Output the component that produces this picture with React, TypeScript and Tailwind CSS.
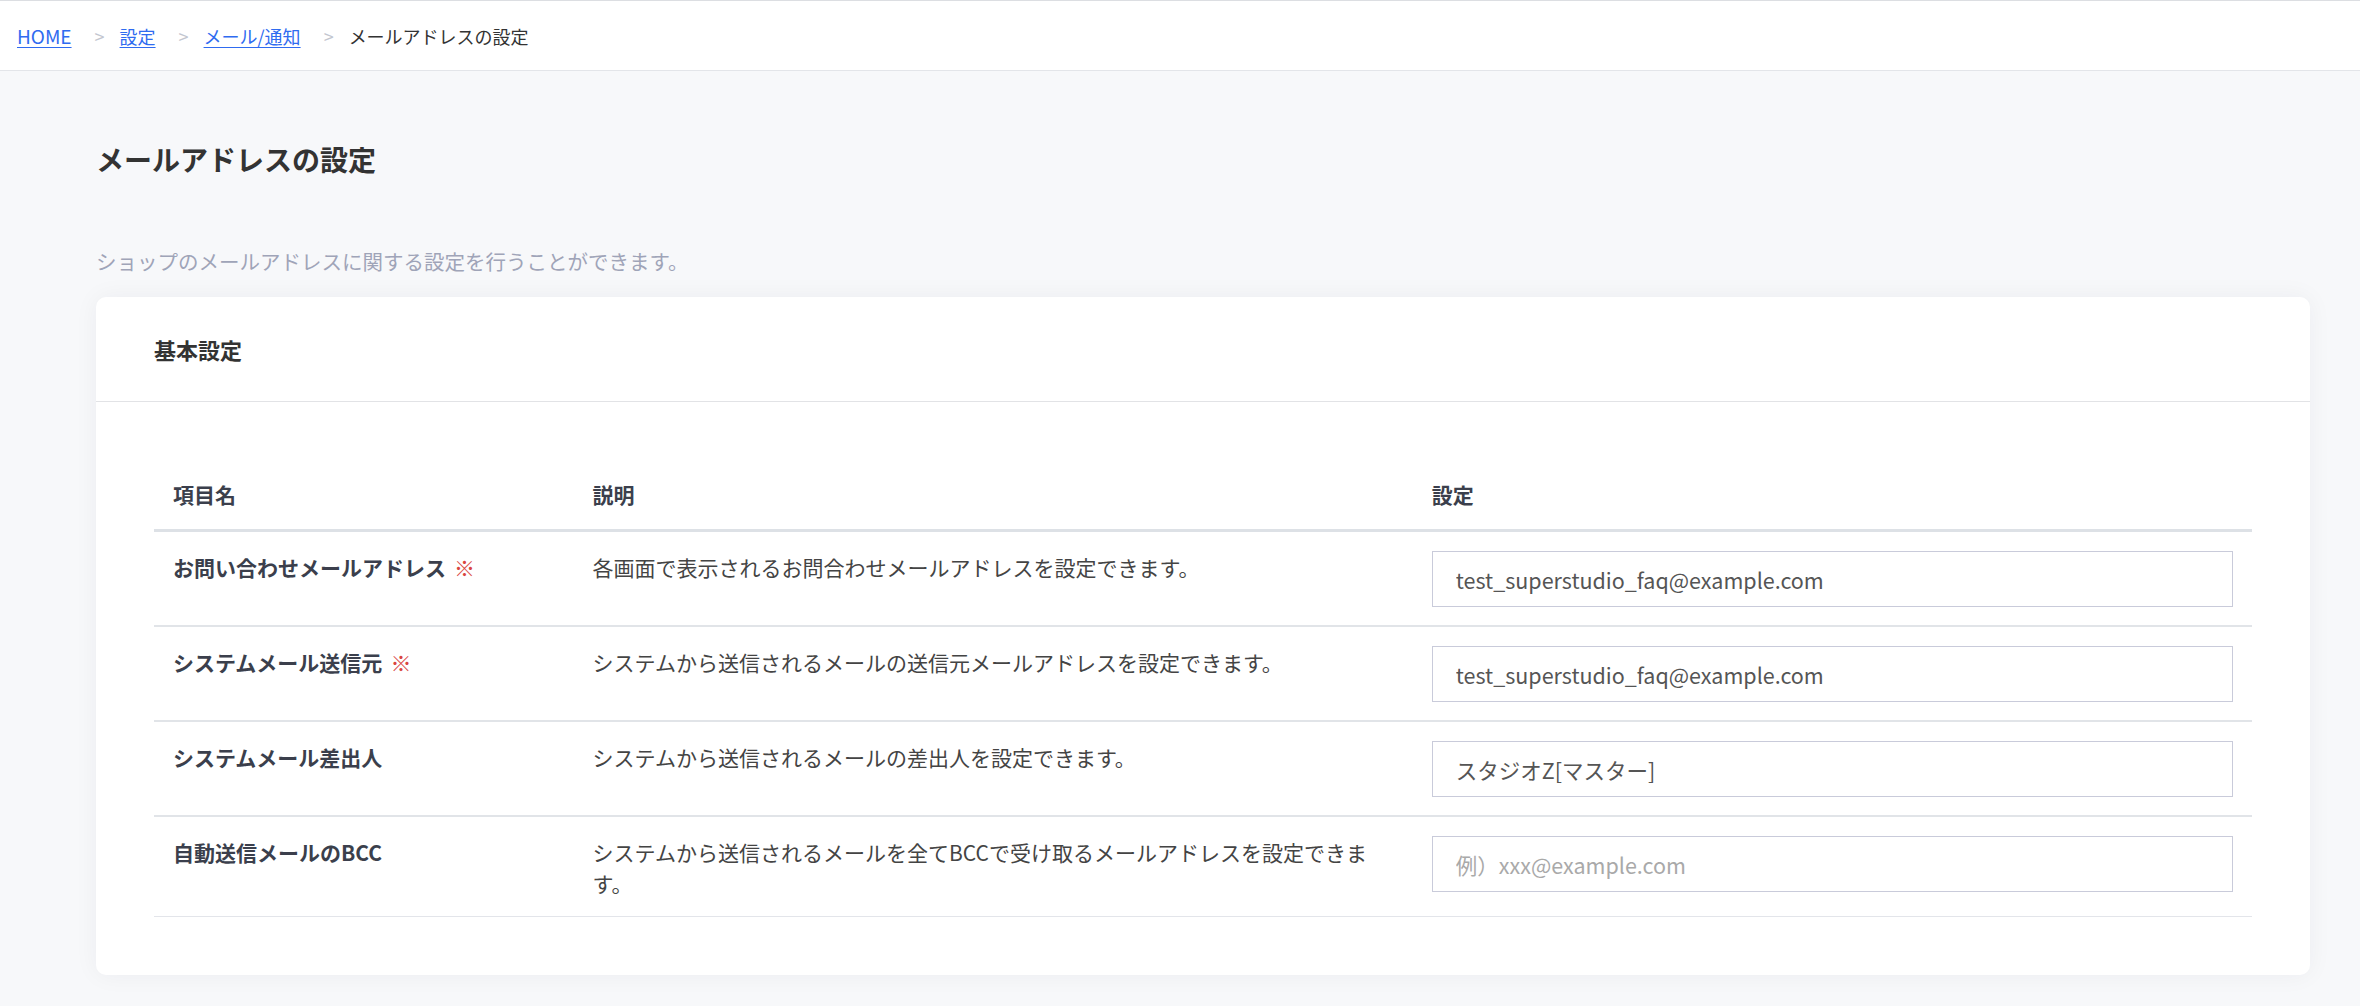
import React from "react";

const rows = [
  {
    label: "お問い合わせメールアドレス",
    required: true,
    desc: "各画面で表示されるお問合わせメールアドレスを設定できます。",
    value: "test_superstudio_faq@example.com",
    placeholder: "",
  },
  {
    label: "システムメール送信元",
    required: true,
    desc: "システムから送信されるメールの送信元メールアドレスを設定できます。",
    value: "test_superstudio_faq@example.com",
    placeholder: "",
  },
  {
    label: "システムメール差出人",
    required: false,
    desc: "システムから送信されるメールの差出人を設定できます。",
    value: "スタジオZ[マスター]",
    placeholder: "",
  },
  {
    label: "自動送信メールのBCC",
    required: false,
    desc: "システムから送信されるメールを全てBCCで受け取るメールアドレスを設定できます。",
    value: "",
    placeholder: "例）xxx@example.com",
  },
];

export default function App() {
  return (
    <div
      className="min-h-[1006px] bg-[#f7f8fa] text-[#333]"
      style={{ fontFamily: '"Noto Sans CJK JP", "Noto Sans", sans-serif' }}
    >
      {/* Breadcrumb */}
      <div className="flex h-[71px] items-center border-t border-b border-t-[#dcdee2] border-b-[#e3e5e9] bg-white pl-[17px] text-[18px] leading-none">
        <a href="#" className="text-[19px] text-[#2f6bf0] underline underline-offset-[3px]">HOME</a>
        <span className="ml-[23px] mr-[15px] text-[#c3c6cf]">&gt;</span>
        <a href="#" className="text-[#2f6bf0] underline underline-offset-[3px]">設定</a>
        <span className="ml-[23px] mr-[15px] text-[#c3c6cf]">&gt;</span>
        <a href="#" className="text-[#2f6bf0] underline underline-offset-[3px]">メール/通知</a>
        <span className="ml-[23px] mr-[15px] text-[#c3c6cf]">&gt;</span>
        <span className="text-[#333]">メールアドレスの設定</span>
      </div>

      {/* Main */}
      <div className="pl-[96px] pr-[50px] pt-[68px] pb-[30px]">
        <h1 className="text-[28px] font-bold leading-[40px] text-[#333]">メールアドレスの設定</h1>
        <p className="mt-[67px] text-[20.5px] leading-[30px] text-[#9fa4b8]">
          ショップのメールアドレスに関する設定を行うことができます。
        </p>

        <div className="mt-[21px] rounded-[10px] bg-white shadow-[0_0_24px_rgba(30,40,60,0.05)]">
          <div className="border-b border-[#e2e3e6] px-[58px] py-[36px]">
            <h2 className="text-[22px] font-bold leading-[32px] text-[#333]">基本設定</h2>
          </div>
          <div className="p-[58px]">
            <table className="w-full table-fixed border-collapse">
              <colgroup>
                <col className="w-[20%]" />
                <col className="w-[40%]" />
                <col className="w-[40%]" />
              </colgroup>
              <thead>
                <tr>
                  <th className="border-b-[3px] border-[#dde1e6] px-[19px] pt-[19px] pb-[20px] text-left text-[21px] font-bold leading-[30px] text-[#3b3f4c]">
                    項目名
                  </th>
                  <th className="border-b-[3px] border-[#dde1e6] px-[19px] pt-[19px] pb-[20px] text-left text-[21px] font-bold leading-[30px] text-[#3b3f4c]">
                    説明
                  </th>
                  <th className="border-b-[3px] border-[#dde1e6] px-[19px] pt-[19px] pb-[20px] text-left text-[21px] font-bold leading-[30px] text-[#3b3f4c]">
                    設定
                  </th>
                </tr>
              </thead>
              <tbody>
                {rows.map((r, i) => {
                  const last = i === rows.length - 1;
                  const bc = last
                    ? "border-b border-[#e3e5ea]"
                    : "border-b-2 border-[#e1e4e8]";
                  return (
                    <tr key={i}>
                      <td className={`${bc} px-[19px] pt-[20px] pb-[17px] align-top text-[21px] font-bold leading-[30px] text-[#3b3f4c]`}>
                        {r.label}
                        {r.required && (
                          <span className="ml-[8px] font-normal text-[#d9463e]">※</span>
                        )}
                      </td>
                      <td className={`${bc} px-[19px] pt-[20px] pb-[17px] align-top text-[21px] leading-[31px] text-[#444]`}>
                        {r.desc}
                      </td>
                      <td className={`${bc} px-[19px] pt-[19px] pb-[18px] align-top`}>
                        <input
                          type="text"
                          defaultValue={r.value}
                          placeholder={r.placeholder}
                          className="block h-[56px] w-full border border-[#c9cbda] bg-white px-[23px] text-[21.5px] text-[#555] outline-none placeholder:text-[#a9a9a9]"
                          style={{ fontFamily: '"Noto Sans CJK JP", "Noto Sans", sans-serif' }}
                        />
                      </td>
                    </tr>
                  );
                })}
              </tbody>
            </table>
          </div>
        </div>
      </div>
    </div>
  );
}
